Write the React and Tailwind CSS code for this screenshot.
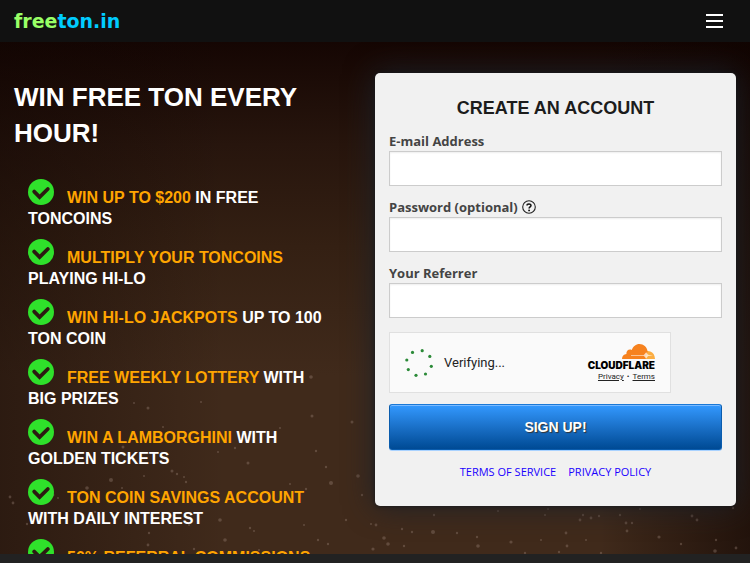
import React from 'react';

const FEATURES = [
    { highlight: 'WIN UP TO $200', first: 'IN FREE', second: 'TONCOINS' },
    { highlight: 'MULTIPLY YOUR TONCOINS', first: '', second: 'PLAYING HI-LO' },
    { highlight: 'WIN HI-LO JACKPOTS', first: 'UP TO 100', second: 'TON COIN' },
    { highlight: 'FREE WEEKLY LOTTERY', first: 'WITH', second: 'BIG PRIZES' },
    { highlight: 'WIN A LAMBORGHINI', first: 'WITH', second: 'GOLDEN TICKETS' },
    { highlight: 'TON COIN SAVINGS ACCOUNT', first: '', second: 'WITH DAILY INTEREST' },
    { highlight: '50% REFERRAL COMMISSIONS', first: '', second: '' },
];

// [x, y, radius] of the dust specks in the hero backdrop
const SPECKS = [
    [134, 403, 1], [148, 408, 1.5], [201, 402, 1], [312, 416, 1.5], [352, 422, 1.5], [280, 428, 1],
    [163, 427, 1], [123, 447, 1.5], [218, 452, 1], [235, 448, 1.2], [316, 451, 1.2], [248, 463, 1.5],
    [172, 471, 1.5], [177, 474, 1.2], [184, 477, 1], [144, 476, 1], [111, 480, 2], [186, 482, 1.2],
    [87, 488, 1.8], [326, 467, 1.2], [358, 476, 1.8], [331, 483, 2], [306, 489, 1.2], [290, 484, 1],
    [10, 497, 1.4], [13, 503, 1.4], [53, 495, 1.4], [58, 498, 1], [122, 488, 1], [362, 495, 1.2],
    [95, 512, 1.2], [27, 524, 1.2], [220, 520, 1.8], [189, 525, 1], [250, 528, 1.2], [254, 531, 1],
    [149, 533, 1.2], [148, 545, 1.4], [225, 540, 1.8], [304, 525, 1], [346, 520, 1.2], [371, 524, 1],
    [376, 525, 1.4], [318, 540, 1.2], [328, 544, 1.2], [373, 549, 1.6], [259, 550, 1], [194, 549, 1.2],
    [311, 377, 1.8], [434, 515, 1.2], [498, 511, 1], [545, 515, 1], [548, 509, 1],
    [402, 529, 1.2], [412, 532, 1.2], [433, 532, 2], [457, 533, 1.2], [384, 538, 1.8], [388, 544, 1.8],
    [404, 546, 1.2], [477, 537, 1.2], [478, 546, 1.8], [511, 542, 1.6], [541, 540, 1], [566, 533, 1.4],
    [567, 546, 1.4], [559, 552, 1.2], [525, 553, 1.2], [580, 520, 1.4], [583, 515, 1.2], [591, 518, 1.4],
    [599, 516, 1.2], [620, 515, 1.2], [626, 523, 1.4], [632, 523, 1.2], [627, 531, 1.4], [659, 537, 1.6],
    [681, 544, 1.2], [692, 516, 1.4], [697, 520, 1.4], [640, 509, 1], [716, 540, 1.2], [715, 551, 1.8],
    [736, 548, 1.4], [733, 508, 1.2], [601, 553, 1.2], [586, 540, 1],
];

const SPINNER_DOTS = [
    [17.2, 1.7], [24.8, 7.4], [26.3, 17.3], [20.5, 25], [11, 26.3], [3.3, 20.6], [1.8, 11], [7.5, 3.4],
];

const CheckBadge = () => (
    <svg viewBox="0 0 26 26" className="w-[26px] h-[26px] shrink-0" aria-hidden="true">
        <circle cx="13" cy="13" r="13" fill="#2fe12b" />
        <path d="M6.2 12.6l5.4 5.4L19.8 10" fill="none" stroke="#2c1a11" strokeWidth="3.8" strokeLinecap="round" strokeLinejoin="miter" />
    </svg>
);

const Backdrop = () => (
    <svg className="absolute inset-0 w-full h-full" viewBox="0 42 750 512" preserveAspectRatio="xMidYMax slice" aria-hidden="true">
        {SPECKS.map(([x, y, r]) => (
            <circle key={`${x}-${y}`} cx={x} cy={y} r={r} fill="#a58d80" opacity="0.34" />
        ))}
    </svg>
);

const Feature = ({ highlight, first, second }) => (
    <li className="mb-[10px]">
        <div className="flex items-end h-[29px] gap-[13px]">
            <div className="self-start">
                <CheckBadge />
            </div>
            <span className="leading-5 whitespace-nowrap">
                <span className="text-[#ffa500]">{highlight}</span> {first}
            </span>
        </div>
        {second && <div className="leading-[21px]">{second}</div>}
    </li>
);

const Field = ({ id, label, type, hint }) => (
    <div className="mb-[11px]">
        <div className="flex items-center h-5 gap-1 text-[13px] leading-5 font-bold text-[#444]">
            <label htmlFor={id}>{label}</label>
            {hint}
        </div>
        <input
            id={id}
            type={type}
            className="block w-full h-[35px] px-2 bg-white border border-[#ccc] shadow-[inset_0_1px_2px_#eee] outline-none"
        />
    </div>
);

const HelpIcon = () => (
    <svg viewBox="0 0 14 14" className="w-[14px] h-[14px]" aria-hidden="true">
        <circle cx="7" cy="7" r="6.3" fill="none" stroke="#222" strokeWidth="1.1" />
        <path d="M5 5.6C5 3.4 9 3.4 9 5.5C9 6.8 7.1 6.9 7.1 8.4" fill="none" stroke="#111" strokeWidth="1.5" />
        <circle cx="7.1" cy="10.4" r="0.95" fill="#111" />
    </svg>
);

const CloudLogo = () => (
    <svg viewBox="0 0 33 15" className="w-[33px] h-[15px]" aria-hidden="true">
        <path d="M22.6 15L24 7.2Q26 6.6 28.3 7.4C31 8.3 32.8 10.8 33 15Z" fill="#fbad41" />
        <path d="M0 15C0 12 1.8 10.3 4.4 10C4 6.7 7 4.6 9.8 6C11 2.4 14 0 17.4 0C21.6 0 24.9 3 25.6 7.2L23.4 15Z" fill="#f6821f" />
        <path d="M9 11.2H21.6L24.2 8.2L26 10.8L31 11.4L26 12L24.2 14.6L22 12H9Z" fill="#fff" opacity="0.7" />
    </svg>
);

const Turnstile = () => (
    <div className="flex items-center max-w-[282px] h-[61px] mt-[14px] px-[15px] bg-[#fafafa] border border-[#e0e0e0] font-['Liberation_Sans',sans-serif] text-[#232323]">
        <svg viewBox="0 0 28 28" className="w-7 h-7" aria-hidden="true">
            {SPINNER_DOTS.map(([x, y]) => (
                <circle key={`${x}-${y}`} cx={x} cy={y} r="1.6" fill="#2b8a38" />
            ))}
        </svg>
        <span className="ml-[11px] text-[13px] font-['Roboto',sans-serif]">Verifying...</span>
        <div className="flex flex-col items-end ml-auto">
            <CloudLogo />
            <span className="mt-[2px] text-[10px] leading-2 font-black text-black font-['Inter',sans-serif]">CLOUDFLARE</span>
            <div className="flex gap-[3px] mt-[3px] text-[8px] leading-[9px] font-['Roboto',sans-serif]">
                <a href="#privacy" className="underline">Privacy</a>
                <span>•</span>
                <a href="#terms" className="underline">Terms</a>
            </div>
        </div>
    </div>
);

const SignUpCard = () => (
    <form
        onSubmit={(e) => e.preventDefault()}
        className="px-[14px] pt-[23px] pb-6 bg-[#f1f1f1] rounded-[5px] shadow-[0_0_30px_#1b2129,0_0_4px_#111] font-['Open_Sans',sans-serif]"
    >
        <h2 className="mb-[11px] text-center text-lg leading-6 font-bold text-[#1c1c1c] font-['Liberation_Sans',sans-serif]">CREATE AN ACCOUNT</h2>
        <Field id="email" type="email" label="E-mail Address" />
        <Field
            id="password"
            type="password"
            label="Password (optional)"
            hint={
                <button type="button" aria-label="Password help">
                    <HelpIcon />
                </button>
            }
        />
        <Field id="referrer" type="text" label="Your Referrer" />
        <Turnstile />
        <button
            type="submit"
            className="block w-full h-[46px] mt-[11px] rounded-[3px] border border-[#0a5cad] border-t-[#1a78d6] bg-linear-to-b from-[#3399ff] to-[#004a94] shadow-[inset_0_1px_0_#7abaff,0_1px_0_#a9d2ff] text-sm font-bold text-white font-['Liberation_Sans',sans-serif] [text-shadow:1px_1px_1px_#333]"
        >
            SIGN UP!
        </button>
        <div className="flex justify-center gap-3 mt-3 text-[11px] leading-5 text-[#1a00ff]">
            <a href="#terms-of-service">TERMS OF SERVICE</a>
            <a href="#privacy-policy">PRIVACY POLICY</a>
        </div>
    </form>
);

export default function App() {
    return (
        <div className="flex flex-col h-screen bg-[#222] font-['Liberation_Sans',sans-serif]">
            <header className="flex items-center justify-between h-[42px] shrink-0 pl-[14px] pr-[27px] bg-[#111]">
                <a href="#home" className="text-[19px] leading-6 font-bold text-[#99ff66] font-['DejaVu_Sans',sans-serif]">
                    free<span className="text-[#00ccff]">ton.in</span>
                </a>
                <button type="button" aria-label="Menu" className="flex flex-col gap-1">
                    <span className="w-[17px] h-[2px] bg-white" />
                    <span className="w-[17px] h-[2px] bg-white" />
                    <span className="w-[17px] h-[2px] bg-white" />
                </button>
            </header>
            <main className="relative flex-1 min-h-0 overflow-hidden bg-[linear-gradient(to_right,#0f040266,transparent_30%,transparent_80%,#0f040299),linear-gradient(to_bottom,#150603_0%,#27150d_20%,#342013_40%,#402a1b_65%,#402a1b_100%)]">
                <Backdrop />
                <div className="relative grid grid-cols-2 items-start">
                    <section className="pl-[14px] pt-[37px] text-white font-bold">
                        <h1 className="text-[26px] leading-9">
                            WIN FREE TON EVERY
                            <br />
                            HOUR!
                        </h1>
                        <ul className="mt-7 pl-[14px] text-base">
                            {FEATURES.map((feature) => (
                                <Feature key={feature.highlight} {...feature} />
                            ))}
                        </ul>
                    </section>
                    <section className="pt-[31px] pr-[14px]">
                        <SignUpCard />
                    </section>
                </div>
            </main>
            <footer className="h-[9px] shrink-0 bg-[#222]" />
        </div>
    );
}
